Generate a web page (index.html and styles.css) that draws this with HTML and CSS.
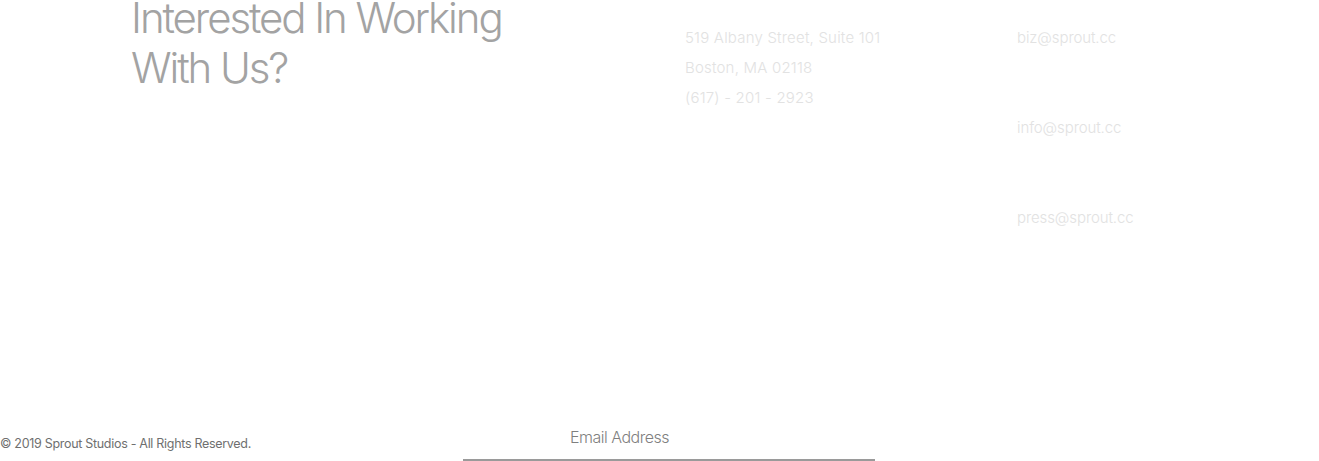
FILE: index.html
```html
<!DOCTYPE html>
<html lang="en">
<head>
<meta charset="utf-8">
<title>Contact</title>
<link rel="stylesheet" href="styles.css">
</head>
<body>
<div class="page">
  <section class="contact">
    <h2 class="headline">Interested In Working<br>With Us?</h2>
    <address class="address">
      <span>519 Albany Street, Suite 101</span>
      <span>Boston, MA 02118</span>
      <span>(617) - 201 - 2923</span>
    </address>
    <div class="emails">
      <a href="#">biz@sprout.cc</a>
      <a href="#">info@sprout.cc</a>
      <a href="#">press@sprout.cc</a>
    </div>
  </section>
  <footer class="footer">
    <p class="copyright">© 2019 Sprout Studios - All Rights Reserved.</p>
    <form class="signup">
      <input class="email-input" type="email" placeholder="Email Address">
    </form>
  </footer>
</div>
</body>
</html>
```

FILE: styles.css
```css
* { box-sizing: border-box; }
html, body { margin: 0; padding: 0; background: #ffffff; }
body {
  font-family: Inter, "Liberation Sans", sans-serif;
  color: #999;
}
.page {
  min-height: 100vh;
  height: 461px;
  display: flex;
  flex-direction: column;
  justify-content: space-between;
  overflow: hidden;
}
.contact {
  display: grid;
  grid-template-columns: 554px 332px 1fr;
  padding-left: 131px;
}
.headline {
  margin: -7px 0 0 0;
  font-size: 42px;
  line-height: 50px;
  font-weight: 300;
  color: #a3a3a3;
  letter-spacing: -2.1px;
}
.address {
  font-style: normal;
  display: flex;
  flex-direction: column;
  padding-top: 23px;
  font-size: 15px;
  line-height: 30px;
  font-weight: 300;
  color: #e2e2e2;
  letter-spacing: 0.2px;
}
.emails {
  display: flex;
  flex-direction: column;
  gap: 60px;
  padding-top: 23px;
}
.emails a {
  font-size: 15px;
  line-height: 30px;
  font-weight: 300;
  color: #e2e2e2;
  text-decoration: none;
  letter-spacing: -0.1px;
}
.footer {
  display: flex;
  align-items: flex-end;
}
.copyright {
  width: 463px;
  margin: 0 0 9px 0;
  font-size: 12.5px;
  line-height: 16px;
  font-weight: 400;
  color: #6f6f6f;
  letter-spacing: -0.3px;
}
.signup { margin: 0; }
.email-input {
  display: block;
  width: 412px;
  height: 42px;
  margin: 0;
  border: 0;
  border-bottom: 2px solid #9a9a9a;
  padding: 0 0 5px 107px;
  font-family: Inter, "Liberation Sans", sans-serif;
  font-size: 16px;
  font-weight: 300;
  letter-spacing: -0.5px;
  color: #777;
  background: transparent;
  outline: none;
}
.email-input::placeholder { color: #7f7f7f; opacity: 1; }
```
